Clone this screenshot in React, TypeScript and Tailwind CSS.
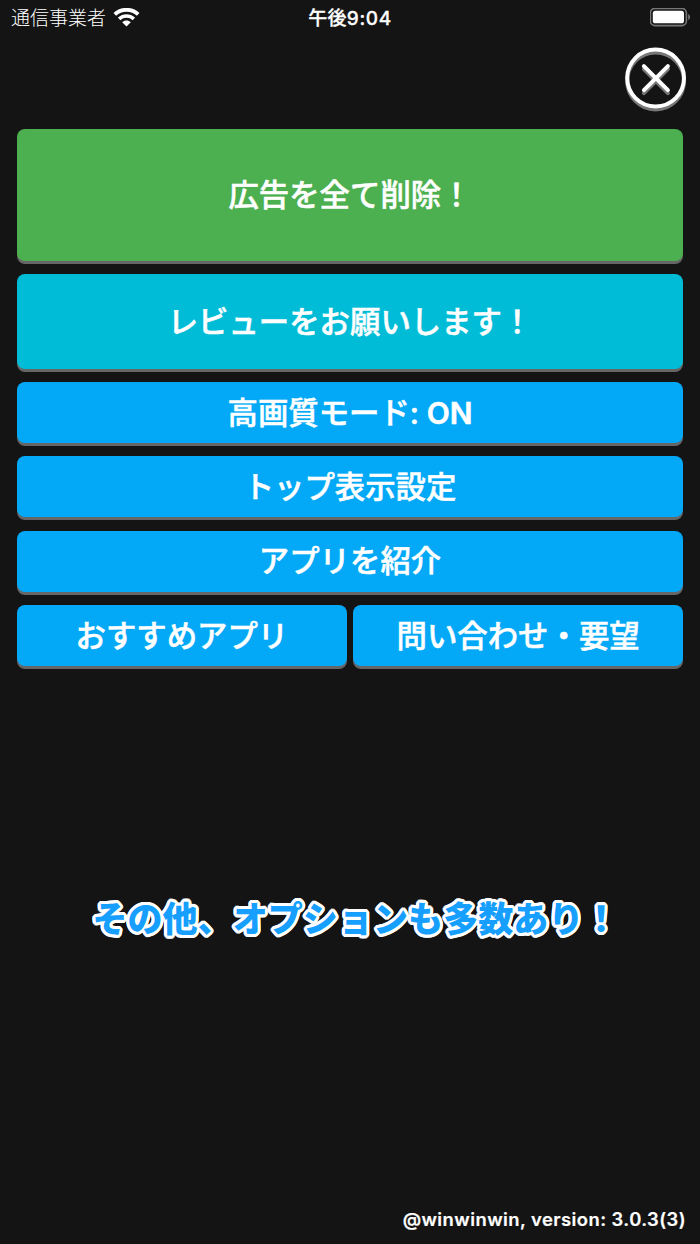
import { cva, type VariantProps } from 'class-variance-authority';

const menuButton = cva(
  'flex items-center justify-center rounded-lg text-[30.4px] leading-none font-medium whitespace-nowrap text-white shadow-[0_3px_0_#666] [-webkit-text-stroke:0.5px_white]',
  {
    variants: {
      tone: {
        green: 'h-[132px] bg-[#4caf50]',
        cyan: 'h-[95px] bg-[#00bcd7]',
        blue: 'h-[61px] bg-[#03a9f7]',
      },
    },
  },
);

interface MenuButtonProps extends VariantProps<typeof menuButton> {
  label: string;
  value?: string;
}

const MenuButton = ({ label, value, tone }: MenuButtonProps) => (
  <button type="button" className={menuButton({ tone })}>
    <span className="pt-px">
      {label}
      {value && <span className="text-[30px] font-semibold"> {value}</span>}
    </span>
  </button>
);

const WifiIcon = () => (
  <svg className="h-[20px] w-[27px]" viewBox="0 0 27 20" fill="none">
    <path d="M1.8 6.4 C8.5 0.2 18.5 0.2 25.2 6.4" stroke="white" strokeWidth="3.8" />
    <path d="M6.1 10.9 C10.4 7 16.6 7 20.9 10.9" stroke="white" strokeWidth="3.5" />
    <path d="M9.2 14.2 C11.7 11.9 15.3 11.9 17.8 14.2 L13.5 18.5 Z" fill="white" />
  </svg>
);

const BatteryIcon = () => (
  <svg className="h-[20px] w-[42px]" viewBox="0 0 42 20">
    <rect x="0.4" y="0.4" width="36" height="17.2" rx="4.6" fill="none" stroke="#777" strokeWidth="1.6" />
    <rect x="2.8" y="2.7" width="31.2" height="12.6" rx="2.6" fill="white" />
    <path d="M38.2 6 C40.7 7 40.7 11 38.2 12 Z" fill="#777" />
  </svg>
);

const closeShape = (
  <>
    <circle cx="30.6" cy="31" r="28.4" strokeWidth="4" />
    <path d="M18.9 19.2 L42.9 43.2 M42.9 19.2 L18.9 43.2" strokeWidth="4" strokeLinecap="round" />
  </>
);

const CloseIcon = () => (
  <svg className="h-[66px] w-[62px]" viewBox="0 0 62 66" fill="none">
    <g stroke="#777" transform="translate(0 3)">
      {closeShape}
    </g>
    <g stroke="white">{closeShape}</g>
  </svg>
);

const StatusBar = () => (
  <header className="grid h-9 grid-cols-3 items-center pr-2 pl-[11px] text-white">
    <div className="flex items-center gap-[7px]">
      <span className="pt-px text-[19px] leading-none font-light">通信事業者</span>
      <WifiIcon />
    </div>
    <span className="pr-[3px] text-center text-[19px] leading-none font-medium tracking-[0.3px] [-webkit-text-stroke:0.3px_white]">
      午後<span className="tracking-[0.6px]">9:04</span>
    </span>
    <div className="flex justify-end">
      <BatteryIcon />
    </div>
  </header>
);

export default function App() {
  return (
    <div
      lang="ja"
      className="flex h-[1244px] w-[700px] flex-col overflow-hidden bg-[#141414] font-['Inter','Noto_Sans_CJK_JP',sans-serif]"
    >
      <StatusBar />

      <div className="flex h-[92.5px] justify-end pt-[11px] pr-[13px]">
        <button type="button" aria-label="閉じる" className="h-[66px]">
          <CloseIcon />
        </button>
      </div>

      <main className="flex flex-col gap-[13.3px] px-[17px]">
        <MenuButton tone="green" label="広告を全て削除！" />
        <MenuButton tone="cyan" label="レビューをお願いします！" />
        <MenuButton tone="blue" label="高画質モード:" value="ON" />
        <MenuButton tone="blue" label="トップ表示設定" />
        <MenuButton tone="blue" label="アプリを紹介" />
        <div className="grid grid-cols-2 gap-[6.5px]">
          <MenuButton tone="blue" label="おすすめアプリ" />
          <MenuButton tone="blue" label="問い合わせ・要望" />
        </div>
      </main>

      {/* Outline drawn as a ring of shadows so its corners stay round */}
      <p className="mt-[228px] pl-[11px] text-center text-[35.1px] leading-[50px] font-black whitespace-nowrap text-[#169fff] [text-shadow:3px_0_white,2.8px_1.1px_white,2.1px_2.1px_white,1.1px_2.8px_white,0_3px_white,-1.1px_2.8px_white,-2.1px_2.1px_white,-2.8px_1.1px_white,-3px_0_white,-2.8px_-1.1px_white,-2.1px_-2.1px_white,-1.1px_-2.8px_white,0_-3px_white,1.1px_-2.8px_white,2.1px_-2.1px_white,2.8px_-1.1px_white]">
        その他、オプションも多数あり！
      </p>

      <footer className="mt-auto pr-[14px] pb-[13px] text-right text-[18.4px] leading-6 font-semibold tracking-[0.45px] text-white [-webkit-text-stroke:0.2px_white]">
        @winwinwin, version: 3.0.3(3)
      </footer>
    </div>
  );
}
